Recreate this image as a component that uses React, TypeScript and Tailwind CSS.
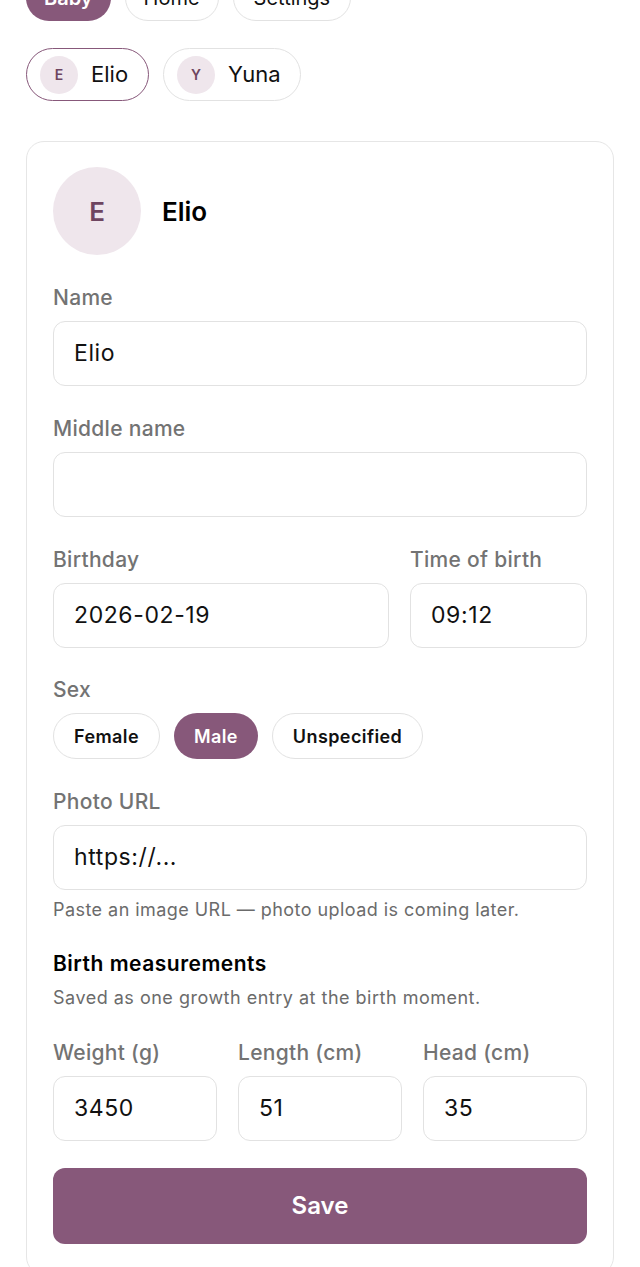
import React from "react";

const font = { fontFamily: "Inter, 'Noto Sans', 'Liberation Sans', sans-serif" };

function Label({ children }: { children: React.ReactNode }) {
  return (
    <div className="text-[21px] leading-[28px] font-medium tracking-[0.3px] text-[#737373] mb-[9px] whitespace-nowrap">
      {children}
    </div>
  );
}

function Input({ value, className = "" }: { value: string; className?: string }) {
  return (
    <div
      className={`h-[65px] rounded-[12px] border border-[#e2e2e2] bg-white flex items-center px-[20px] text-[23px] tracking-[0.6px] text-[#111] ${className}`}
    >
      {value}
    </div>
  );
}

export default function App() {
  return (
    <div style={font} className="bg-white min-h-[1267px] w-[640px] overflow-hidden px-[26px]">
      <div className="flex gap-[14px] -mt-[25px]">
        <div className="h-[46px] px-[18px] rounded-full bg-[#87587a] text-white text-[20px] font-semibold flex items-center">Baby</div>
        <div className="h-[46px] px-[18px] rounded-full border border-[#e2e2e2] text-[#111] text-[20px] flex items-center">Home</div>
        <div className="h-[46px] px-[20px] rounded-full border border-[#e2e2e2] text-[#111] text-[20px] flex items-center">Settings</div>
      </div>

      <div className="flex gap-[14px] mt-[27px]">
        <div className="h-[53px] pl-[13px] pr-[20px] rounded-full border-[1.5px] border-[#87587a] flex items-center gap-[13px]">
          <div className="w-[38px] h-[38px] rounded-full bg-[#efe6ec] text-[#6e4560] text-[14px] font-semibold flex items-center justify-center">E</div>
          <span className="text-[22px] text-[#111]">Elio</span>
        </div>
        <div className="h-[53px] pl-[13px] pr-[19px] rounded-full border border-[#e2e2e2] flex items-center gap-[13px]">
          <div className="w-[38px] h-[38px] rounded-full bg-[#efe6ec] text-[#6e4560] text-[14px] font-semibold flex items-center justify-center">Y</div>
          <span className="text-[22px] text-[#111]">Yuna</span>
        </div>
      </div>

      <div className="mt-[40px] rounded-[18px] border border-[#e6e6e6] px-[26px] pt-[25px] pb-[30px]">
        <div className="flex items-center gap-[21px]">
          <div className="w-[88px] h-[88px] rounded-full bg-[#efe6ec] text-[#6e4560] text-[26px] font-semibold flex items-center justify-center">E</div>
          <div className="text-[26px] font-semibold text-black">Elio</div>
        </div>

        <div className="mt-[29px]">
          <Label>Name</Label>
          <Input value="Elio" />
        </div>

        <div className="mt-[29px]">
          <Label>Middle name</Label>
          <Input value="" />
        </div>

        <div className="mt-[29px] flex gap-[21px]">
          <div className="flex-1">
            <Label>Birthday</Label>
            <Input value="2026-02-19" />
          </div>
          <div className="w-[177px]">
            <Label>Time of birth</Label>
            <Input value="09:12" />
          </div>
        </div>

        <div className="mt-[28px]">
          <Label>Sex</Label>
          <div className="flex gap-[14px]">
            <div className="h-[46px] px-[20px] rounded-full border border-[#e2e2e2] text-[18px] font-semibold tracking-[0.4px] text-[#111] flex items-center">Female</div>
            <div className="h-[46px] px-[20px] rounded-full bg-[#87587a] text-[18px] font-semibold tracking-[0.4px] text-white flex items-center">Male</div>
            <div className="h-[46px] px-[20px] rounded-full border border-[#e2e2e2] text-[18px] font-semibold tracking-[0.4px] text-[#111] flex items-center">Unspecified</div>
          </div>
        </div>

        <div className="mt-[29px]">
          <Label>Photo URL</Label>
          <Input value="https://..." />
          <div className="mt-[8px] text-[18px] leading-[24px] tracking-[0.45px] text-[#6b6b6b] whitespace-nowrap">
            Paste an image URL — photo upload is coming later.
          </div>
        </div>

        <div className="mt-[28px]">
          <div className="text-[21px] leading-[28px] font-semibold tracking-[0.5px] text-black">Birth measurements</div>
          <div className="mt-[8px] text-[18px] leading-[24px] tracking-[0.5px] text-[#6b6b6b] whitespace-nowrap">
            Saved as one growth entry at the birth moment.
          </div>
        </div>

        <div className="mt-[29px] grid grid-cols-3 gap-[21px]">
          <div>
            <Label>Weight (g)</Label>
            <Input value="3450" />
          </div>
          <div>
            <Label>Length (cm)</Label>
            <Input value="51" />
          </div>
          <div>
            <Label>Head (cm)</Label>
            <Input value="35" />
          </div>
        </div>

        <div className="mt-[27px] h-[76px] rounded-[12px] bg-[#87587a] text-white text-[24px] font-semibold flex items-center justify-center">Save</div>
      </div>
    </div>
  );
}
